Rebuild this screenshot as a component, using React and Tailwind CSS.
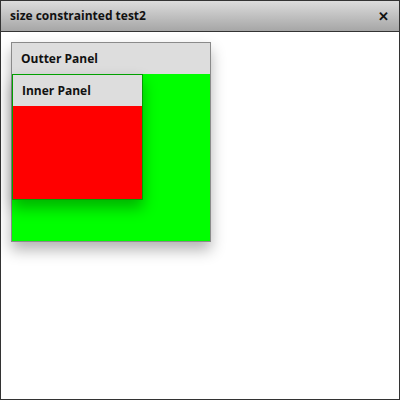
export default function App() {
  return (
    <div className="flex h-[400px] w-[400px] flex-col border border-[#333] bg-white font-['Open_Sans',sans-serif]">
      <div className="flex h-[31px] items-center justify-between border-b border-[#333] bg-gradient-to-b from-[#dcdcdc] to-[#a6a6a6] pl-[9px] pr-[10px]">
        <span className="text-[12px] font-bold text-[#111]">size constrainted test2</span>
        <span className="text-[13px] font-bold leading-none text-[#111]">✕</span>
      </div>
      <div className="pl-[10px] pt-[10px]">
        <div className="flex h-[200px] w-[200px] flex-col border border-[#8a8a8a] bg-[#00ff00] shadow-[0_8px_14px_rgba(0,0,0,0.3)]">
          <div className="flex h-[31px] items-center bg-[#dddddd] pl-[9px] text-[12px] font-bold text-[#111]">
            Outter Panel
          </div>
          <div className="flex h-[126px] w-[131px] flex-col border border-[#00a000] bg-[#ff0000] shadow-[0_8px_14px_rgba(0,0,0,0.3)]">
            <div className="flex h-[31px] items-center bg-[#dddddd] pl-[9px] text-[12px] font-bold text-[#111]">
              Inner Panel
            </div>
          </div>
        </div>
      </div>
    </div>
  );
}
